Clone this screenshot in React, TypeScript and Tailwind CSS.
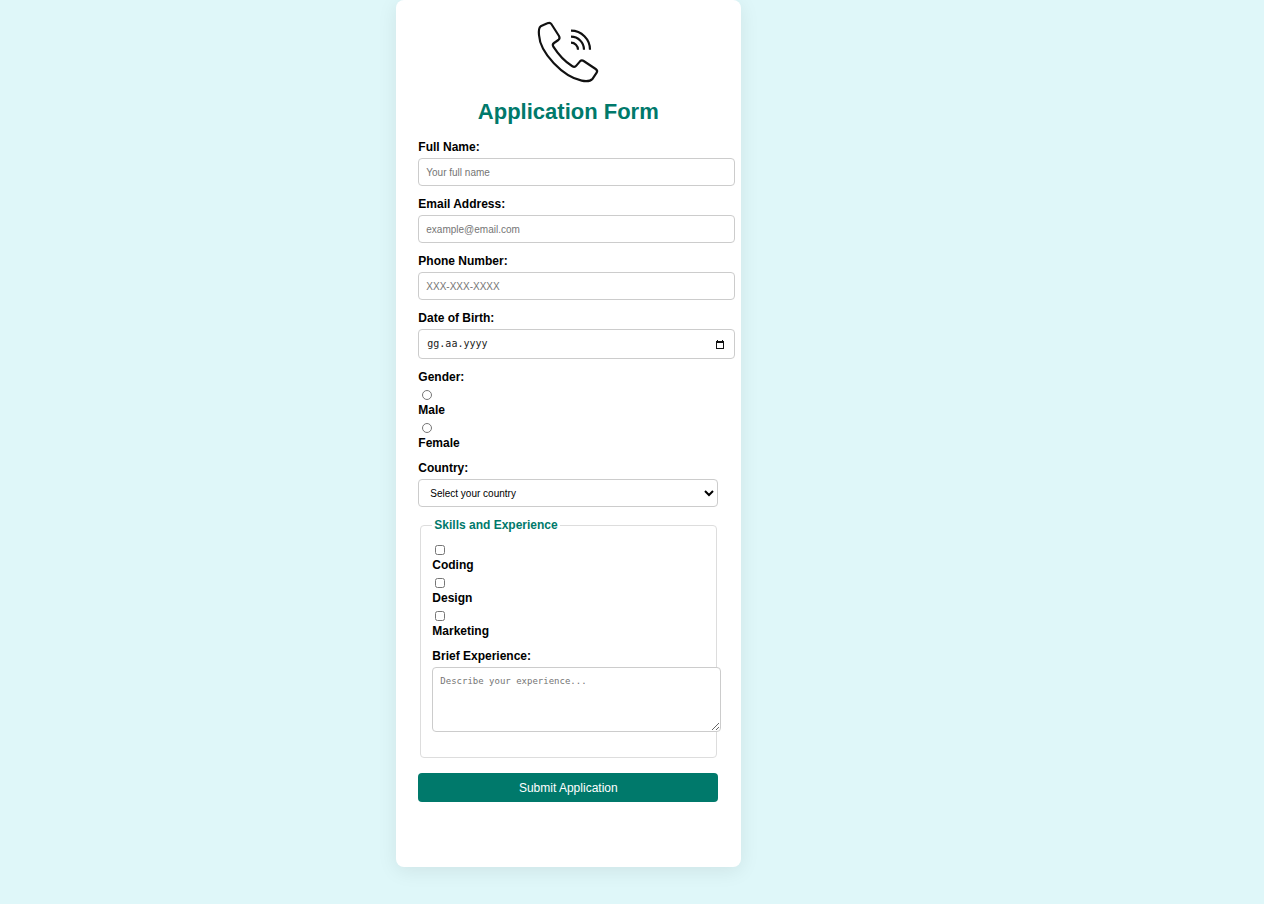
import React from "react";

const labelClass = "block text-[12px] leading-[14px] font-bold text-black";
const fieldClass =
  "block rounded-[4px] border border-[#ccc] bg-white px-[7px] text-[10px] text-black placeholder:text-[#757575] focus:outline-[#00796b]";

function TextField({
  id,
  label,
  type,
  placeholder,
}: {
  id: string;
  label: string;
  type: string;
  placeholder: string;
}) {
  return (
    <div className="flex flex-col gap-[4px]">
      <label htmlFor={id} className={labelClass}>
        {label}
      </label>
      <input
        id={id}
        type={type}
        placeholder={placeholder}
        className={`${fieldClass} h-[28px] w-[calc(100%+17px)]`}
      />
    </div>
  );
}

function Choice({
  id,
  type,
  name,
  label,
}: {
  id: string;
  type: "radio" | "checkbox";
  name: string;
  label: string;
}) {
  return (
    <div className="flex flex-col items-start gap-[3px]">
      <input
        id={id}
        type={type}
        name={name}
        className={type === "radio" ? "ml-[4px] h-[10px] w-[10px]" : "ml-[3px] h-[10px] w-[10px]"}
      />
      <label htmlFor={id} className={labelClass}>
        {label}
      </label>
    </div>
  );
}

function PhoneIcon() {
  return (
    <svg
      viewBox="54 36 180 180"
      className="mx-auto block h-[60px] w-[60px] overflow-visible"
      fill="none"
      stroke="#111"
      strokeWidth="6.5"
      strokeLinejoin="round"
      aria-hidden="true"
    >
      <path d="M62 49 L82 40 Q90 36 94 42 L117 78 Q121 85 115 90 L102 99 Q96 103 100 110 Q125 149 156 168 Q164 173 169 167 L180 154 Q185 149 191 153 L227 177 Q234 182 230 188 L218 206 C211 214 200 215 185 212 C130 200 60 130 57 75 Q55 54 62 49 Z" />
      <path d="M153 62 A57 57 0 0 1 210 119" />
      <path d="M153 80 A39 39 0 0 1 192 119" />
      <path d="M153 98 A21 21 0 0 1 174 119" />
    </svg>
  );
}

export default function App() {
  return (
    <div className="min-h-screen bg-[#dff7f9] font-['Liberation_Sans',Arial,sans-serif] text-black">
      <main className="flex w-[90%] justify-center">
        <form
          className="w-full max-w-[345px] rounded-[8px] bg-white pt-[22px] pr-[23px] pb-[65px] pl-[22px] shadow-[0_4px_20px_rgba(0,0,0,0.08)]"
          onSubmit={(e) => e.preventDefault()}
        >
          <PhoneIcon />
          <h1 className="mt-[17px] mb-[15px] text-center text-[22px] leading-[26px] font-bold text-[#00796b]">
            Application Form
          </h1>

          <div className="flex flex-col gap-[11px]">
            <TextField id="name" label="Full Name:" type="text" placeholder="Your full name" />
            <TextField id="email" label="Email Address:" type="email" placeholder="example@email.com" />
            <TextField id="phone" label="Phone Number:" type="tel" placeholder="XXX-XXX-XXXX" />

            <div className="flex flex-col gap-[4px]">
              <label htmlFor="birth" className={labelClass}>
                Date of Birth:
              </label>
              <div className="flex h-[30px] w-[calc(100%+17px)] items-center rounded-[4px] border border-[#ccc] bg-white pr-[10px] pl-[8px]">
                <input
                  id="birth"
                  type="text"
                  placeholder="gg.aa.yyyy"
                  className="min-w-0 flex-1 font-['DejaVu_Sans_Mono',monospace] text-[10px] leading-[14px] outline-none placeholder:text-[#222]"
                />
                <button type="button" aria-label="Open calendar">
                  <svg viewBox="0 0 8 9" className="block h-[9px] w-[8px]" aria-hidden="true">
                    <path
                      d="M0 1h1V0h1v1h4V0h1v1h1v8H0zM1 3v5h6V3z"
                      fill="#111"
                      fillRule="evenodd"
                    />
                  </svg>
                </button>
              </div>
            </div>

            <div role="radiogroup" aria-labelledby="gender-label" className="flex flex-col gap-[6px]">
              <span id="gender-label" className={labelClass}>
                Gender:
              </span>
              <Choice id="male" type="radio" name="gender" label="Male" />
              <Choice id="female" type="radio" name="gender" label="Female" />
            </div>

            <div className="flex flex-col gap-[4px]">
              <label htmlFor="country" className={labelClass}>
                Country:
              </label>
              <select id="country" className={`${fieldClass} h-[28px] w-full`}>
                <option>Select your country</option>
              </select>
            </div>

            <fieldset className="mr-[1px] ml-[2px] rounded-[4px] border border-[#ddd] px-[11px] pb-[25px]">
              <legend className="px-[2px] text-[12px] leading-[14px] font-bold text-[#00796b]">
                Skills and Experience
              </legend>
              <div className="flex flex-col gap-[6px] pt-[13px]">
                <Choice id="coding" type="checkbox" name="skills" label="Coding" />
                <Choice id="design" type="checkbox" name="skills" label="Design" />
                <Choice id="marketing" type="checkbox" name="skills" label="Marketing" />
              </div>
              <div className="mt-[11px] flex flex-col gap-[4px]">
                <label htmlFor="experience" className={labelClass}>
                  Brief Experience:
                </label>
                <textarea
                  id="experience"
                  placeholder="Describe your experience..."
                  className="block h-[65px] w-[calc(100%+16px)] resize rounded-[4px] border border-[#ccc] bg-white p-[7px] font-['DejaVu_Sans_Mono',monospace] text-[9px] leading-[12px] placeholder:text-[#757575] focus:outline-[#00796b]"
                />
              </div>
            </fieldset>
          </div>

          <button
            type="submit"
            className="mt-[15px] block h-[29px] w-full rounded-[4px] bg-[#00796b] text-[12px] leading-[14px] text-white"
          >
            Submit Application
          </button>
        </form>
      </main>
    </div>
  );
}
